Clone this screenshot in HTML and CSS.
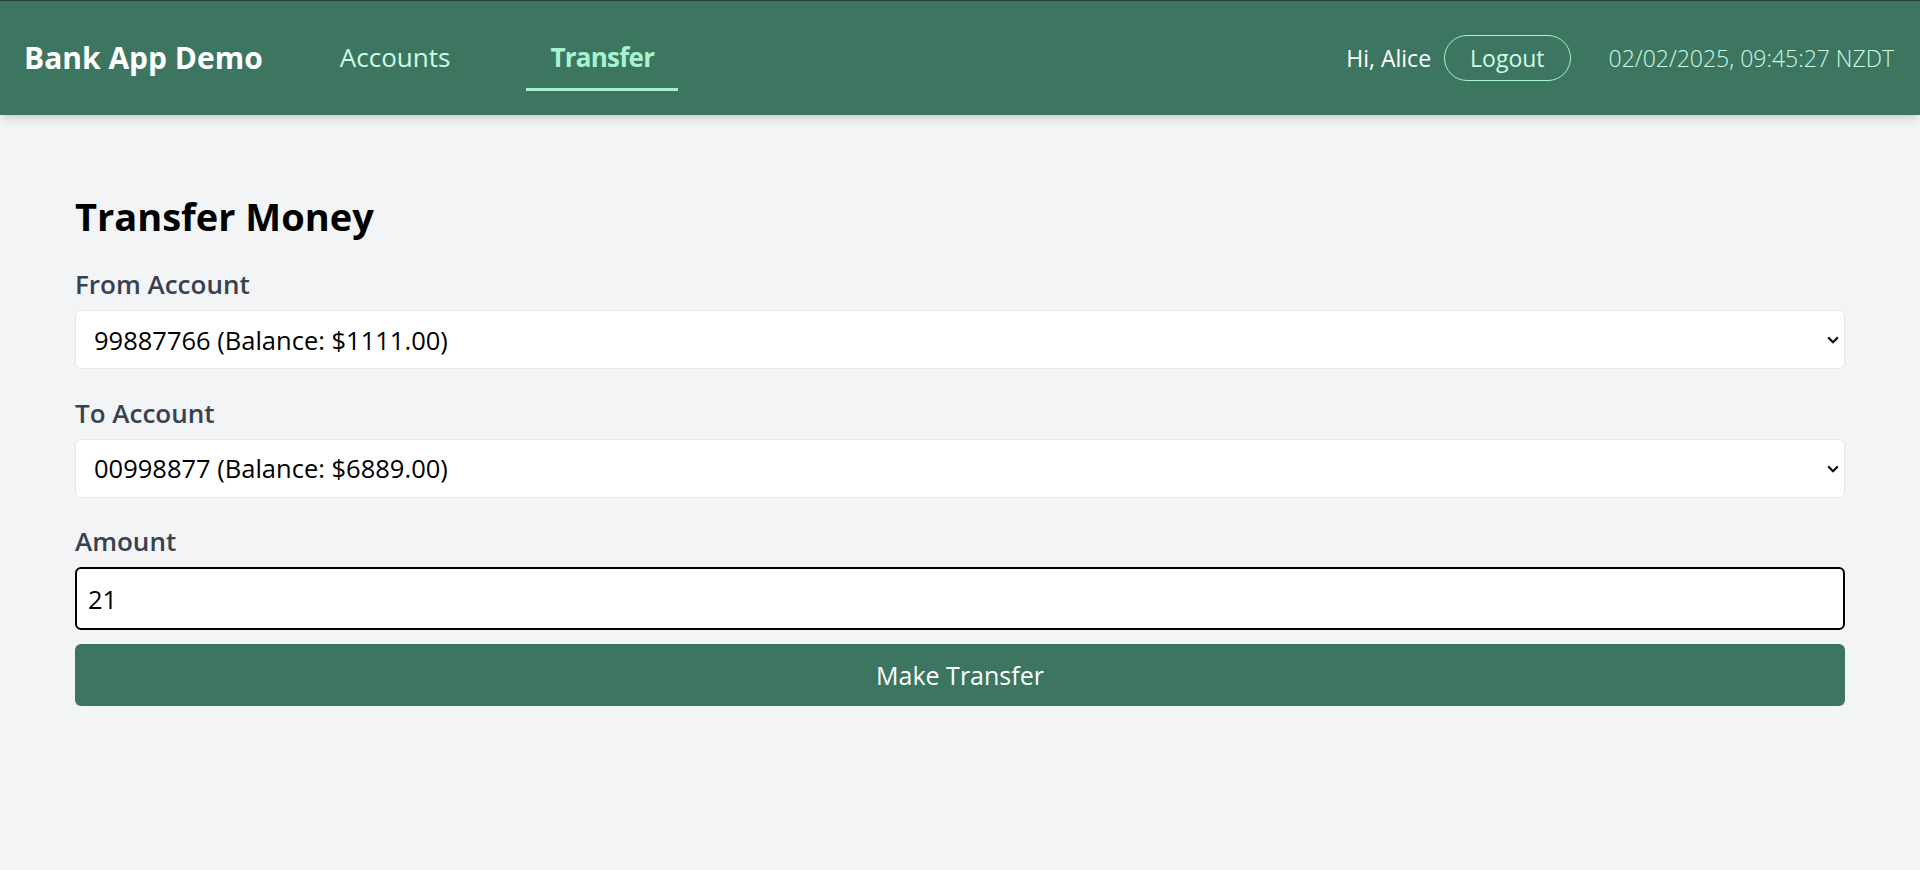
FILE: index.html
```html
<!DOCTYPE html>
<html lang="en">
<head>
<meta charset="utf-8">
<title>Bank App Demo</title>
<link rel="stylesheet" href="styles.css">
</head>
<body>
<header class="topbar">
  <div class="brand">Bank App Demo</div>
  <nav class="nav">
    <a class="nav-link">Accounts</a>
    <a class="nav-link active">Transfer</a>
  </nav>
  <div class="user">
    <span class="greet">Hi, Alice</span>
    <button class="logout" type="button">Logout</button>
    <span class="clock">02/02/2025, 09:45:27 NZDT</span>
  </div>
</header>
<main class="page">
  <h1 class="title">Transfer Money</h1>
  <form class="form">
    <div class="field">
      <label class="label">From Account</label>
      <div class="select-wrap">
        <select class="control select"><option>99887766 (Balance: $1111.00)</option></select>
        <svg class="chev" viewBox="0 0 12 8" width="12" height="8"><path d="M1.2 1.4 L6 6.2 L10.8 1.4" fill="none" stroke="#111" stroke-width="2.2"/></svg>
      </div>
    </div>
    <div class="field">
      <label class="label">To Account</label>
      <div class="select-wrap">
        <select class="control select"><option>00998877 (Balance: $6889.00)</option></select>
        <svg class="chev" viewBox="0 0 12 8" width="12" height="8"><path d="M1.2 1.4 L6 6.2 L10.8 1.4" fill="none" stroke="#111" stroke-width="2.2"/></svg>
      </div>
    </div>
    <div class="field field-last">
      <label class="label">Amount</label>
      <input class="control input" type="text" value="21">
    </div>
    <button class="submit" type="button">Make Transfer</button>
  </form>
</main>
</body>
</html>
```
FILE: styles.css
```css
html, body {
  margin: 0;
  padding: 0;
}
body {
  background: #f3f4f6;
  font-family: "Open Sans", "Noto Sans", sans-serif;
  color: #000;
  height: 870px;
  overflow: hidden;
}
.topbar {
  box-sizing: border-box;
  height: 115px;
  background: #3c7660;
  border-top: 1px solid #2c3d36;
  display: flex;
  align-items: center;
  padding: 0 26px 0 24px;
  box-shadow: 0 6px 10px -2px rgba(0,0,0,0.12), 0 3px 6px -3px rgba(0,0,0,0.1);
  position: relative;
  z-index: 1;
}
.brand {
  color: #fff;
  font-weight: 700;
  font-size: 30px;
  line-height: 38px;
}
.nav {
  display: flex;
  gap: 52px;
  margin-left: 53px;
  align-self: center;
}
.nav-link {
  display: block;
  padding: 14px 24px 13px;
  font-size: 26px;
  line-height: 36px;
  color: #d1fae5;
  border-bottom: 3px solid transparent;
}
.nav-link.active {
  color: #a7f3d0;
  font-weight: 700;
  letter-spacing: -0.75px;
  border-bottom-color: #a7f3d0;
}
.user {
  margin-left: auto;
  display: flex;
  align-items: center;
}
.greet {
  color: #fff;
  font-size: 23px;
  font-weight: 500;
}
.logout {
  margin-left: 13px;
  height: 46px;
  padding: 0 25px;
  border: 1.5px solid #a7f3d0;
  border-radius: 999px;
  background: transparent;
  color: #d1fae5;
  font-family: inherit;
  font-size: 23px;
  line-height: 1;
}
.clock {
  margin-left: 38px;
  color: #d1fae5;
  font-weight: 300;
  font-size: 23px;
}
.page {
  padding: 78px 75px 0;
}
.title {
  margin: 0 0 29px;
  font-size: 38px;
  line-height: 46px;
  font-weight: 700;
  color: #000;
}
.form {
  display: flex;
  flex-direction: column;
}
.field {
  display: flex;
  flex-direction: column;
  margin-bottom: 27.5px;
}
.field-last {
  margin-bottom: 14px;
}
.label {
  font-size: 26px;
  line-height: 32px;
  font-weight: 600;
  color: #374151;
  margin-bottom: 10px;
}
.select-wrap {
  position: relative;
}
.control {
  box-sizing: border-box;
  width: 100%;
  font-family: inherit;
  font-size: 25.5px;
  color: #000;
  background: #fff;
  margin: 0;
}
.select {
  -webkit-appearance: none;
  appearance: none;
  height: 59px;
  border: 1px solid #e5e7eb;
  border-radius: 6px;
  padding: 0 40px 0 18px;
}
.chev {
  position: absolute;
  right: 6px;
  top: 26px;
  width: 12px;
  height: 8px;
}
.input {
  height: 63px;
  border: 2px solid #000;
  border-radius: 6px;
  padding: 0 11px;
  outline: none;
}
.submit {
  height: 62px;
  border: none;
  border-radius: 6px;
  background: #3c7660;
  color: #fff;
  font-family: inherit;
  font-size: 25px;
}
```
